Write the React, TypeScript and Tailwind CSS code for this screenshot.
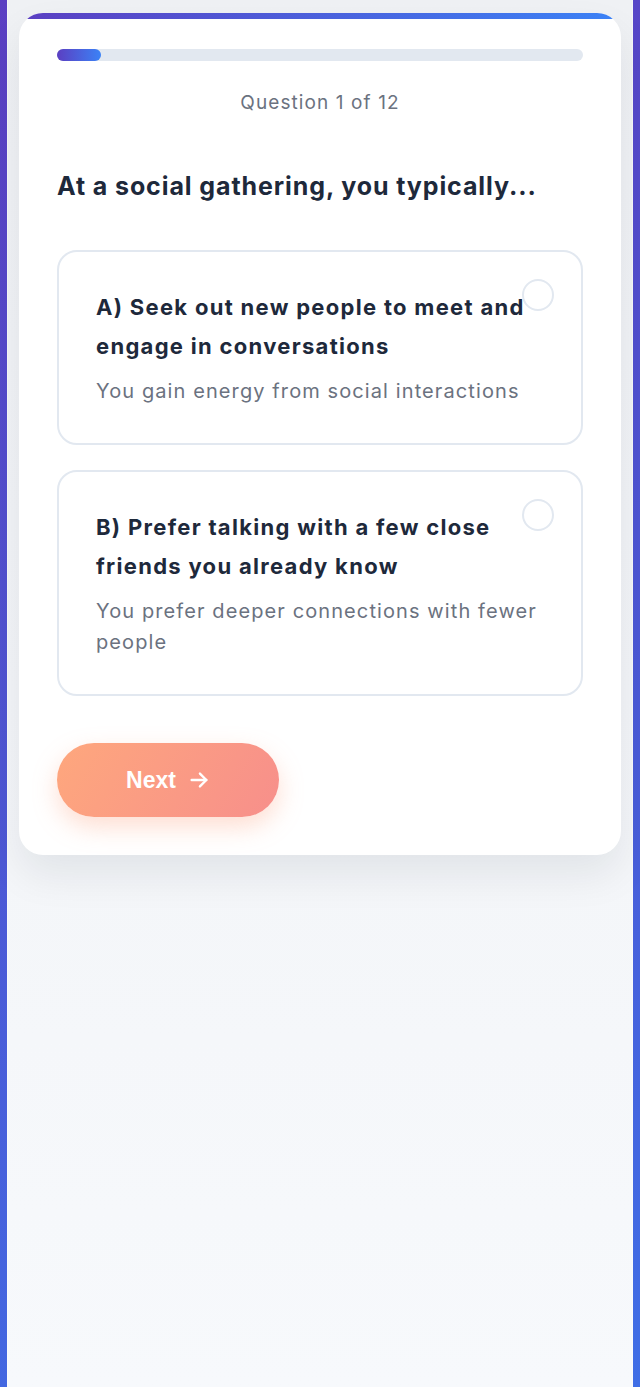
import React, { useState } from "react";

const options = [
  {
    id: "A",
    title: "A) Seek out new people to meet and engage in conversations",
    desc: "You gain energy from social interactions",
  },
  {
    id: "B",
    title: "B) Prefer talking with a few close friends you already know",
    desc: "You prefer deeper connections with fewer people",
  },
];

export default function App() {
  const [selected, setSelected] = useState<string | null>(null);
  const current = 1;
  const total = 12;

  return (
    <div className="min-h-[1387px] bg-[linear-gradient(160deg,#5b3fc2,#3f6ee6)] px-[7px] font-['Inter',sans-serif]">
      <div className="min-h-[1387px] border-x border-white/40 bg-[linear-gradient(180deg,#eff1f4,#f7f9fc)] px-[11px] pt-[13px]">
        {/* Quiz card */}
        <div className="relative overflow-hidden rounded-[24px] bg-white px-[38px] pt-[36px] pb-[38px] shadow-[0_20px_40px_rgba(15,23,42,0.08)]">
          <div className="absolute inset-x-0 top-0 h-[6px] bg-[linear-gradient(90deg,#5b3fc2,#3b82f6)]" />

          {/* Progress */}
          <div className="h-3 w-full rounded-full bg-[#e2e8f0]">
            <div
              className="h-3 rounded-full bg-[linear-gradient(90deg,#5b3fc2,#3b82f6)]"
              style={{ width: `${(current / total) * 100}%` }}
            />
          </div>
          <p className="mt-[28px] text-center text-[19px] leading-[27px] tracking-[1.1px] text-[#6b7280]">
            Question {current} of {total}
          </p>

          <h2 className="mt-[54px] text-[25px] leading-[32px] font-bold tracking-[0.9px] text-[#1e293b]">
            At a social gathering, you typically...
          </h2>

          {/* Options */}
          <div className="mt-[48px] flex flex-col gap-[25px]">
            {options.map((opt) => (
              <button
                key={opt.id}
                onClick={() => setSelected(opt.id)}
                className={`relative rounded-[20px] border-2 pl-[37px] pr-[34px] py-[36px] text-left ${
                  selected === opt.id ? "border-[#5b3fc2]" : "border-[#e2e8f0]"
                }`}
              >
                <span className="absolute top-[27px] right-[27px] h-8 w-8 rounded-full border-2 border-[#e2e8f0]" />
                <h3 className="text-[22px] leading-[39px] font-bold tracking-[1.3px] text-[#1e293b]">
                  {opt.title}
                </h3>
                <p className="mt-[10px] text-[20px] leading-[31px] tracking-[1.1px] text-[#6b7280]">
                  {opt.desc}
                </p>
              </button>
            ))}
          </div>

          <button className="mt-[47px] flex h-[74px] w-[222px] items-center justify-center gap-3 rounded-full bg-[linear-gradient(120deg,#fea77d,#f78f8b)] font-['Liberation_Sans',sans-serif] text-[23px] font-bold text-white shadow-[0_10px_25px_rgba(253,160,126,0.35)]">
            Next
            <svg width="22" height="22" viewBox="0 0 24 24" fill="none" stroke="currentColor" strokeWidth="2.6" strokeLinecap="round" strokeLinejoin="round">
              <path d="M4 12h16" />
              <path d="M13 5l7 7-7 7" />
            </svg>
          </button>
        </div>
      </div>
    </div>
  );
}
